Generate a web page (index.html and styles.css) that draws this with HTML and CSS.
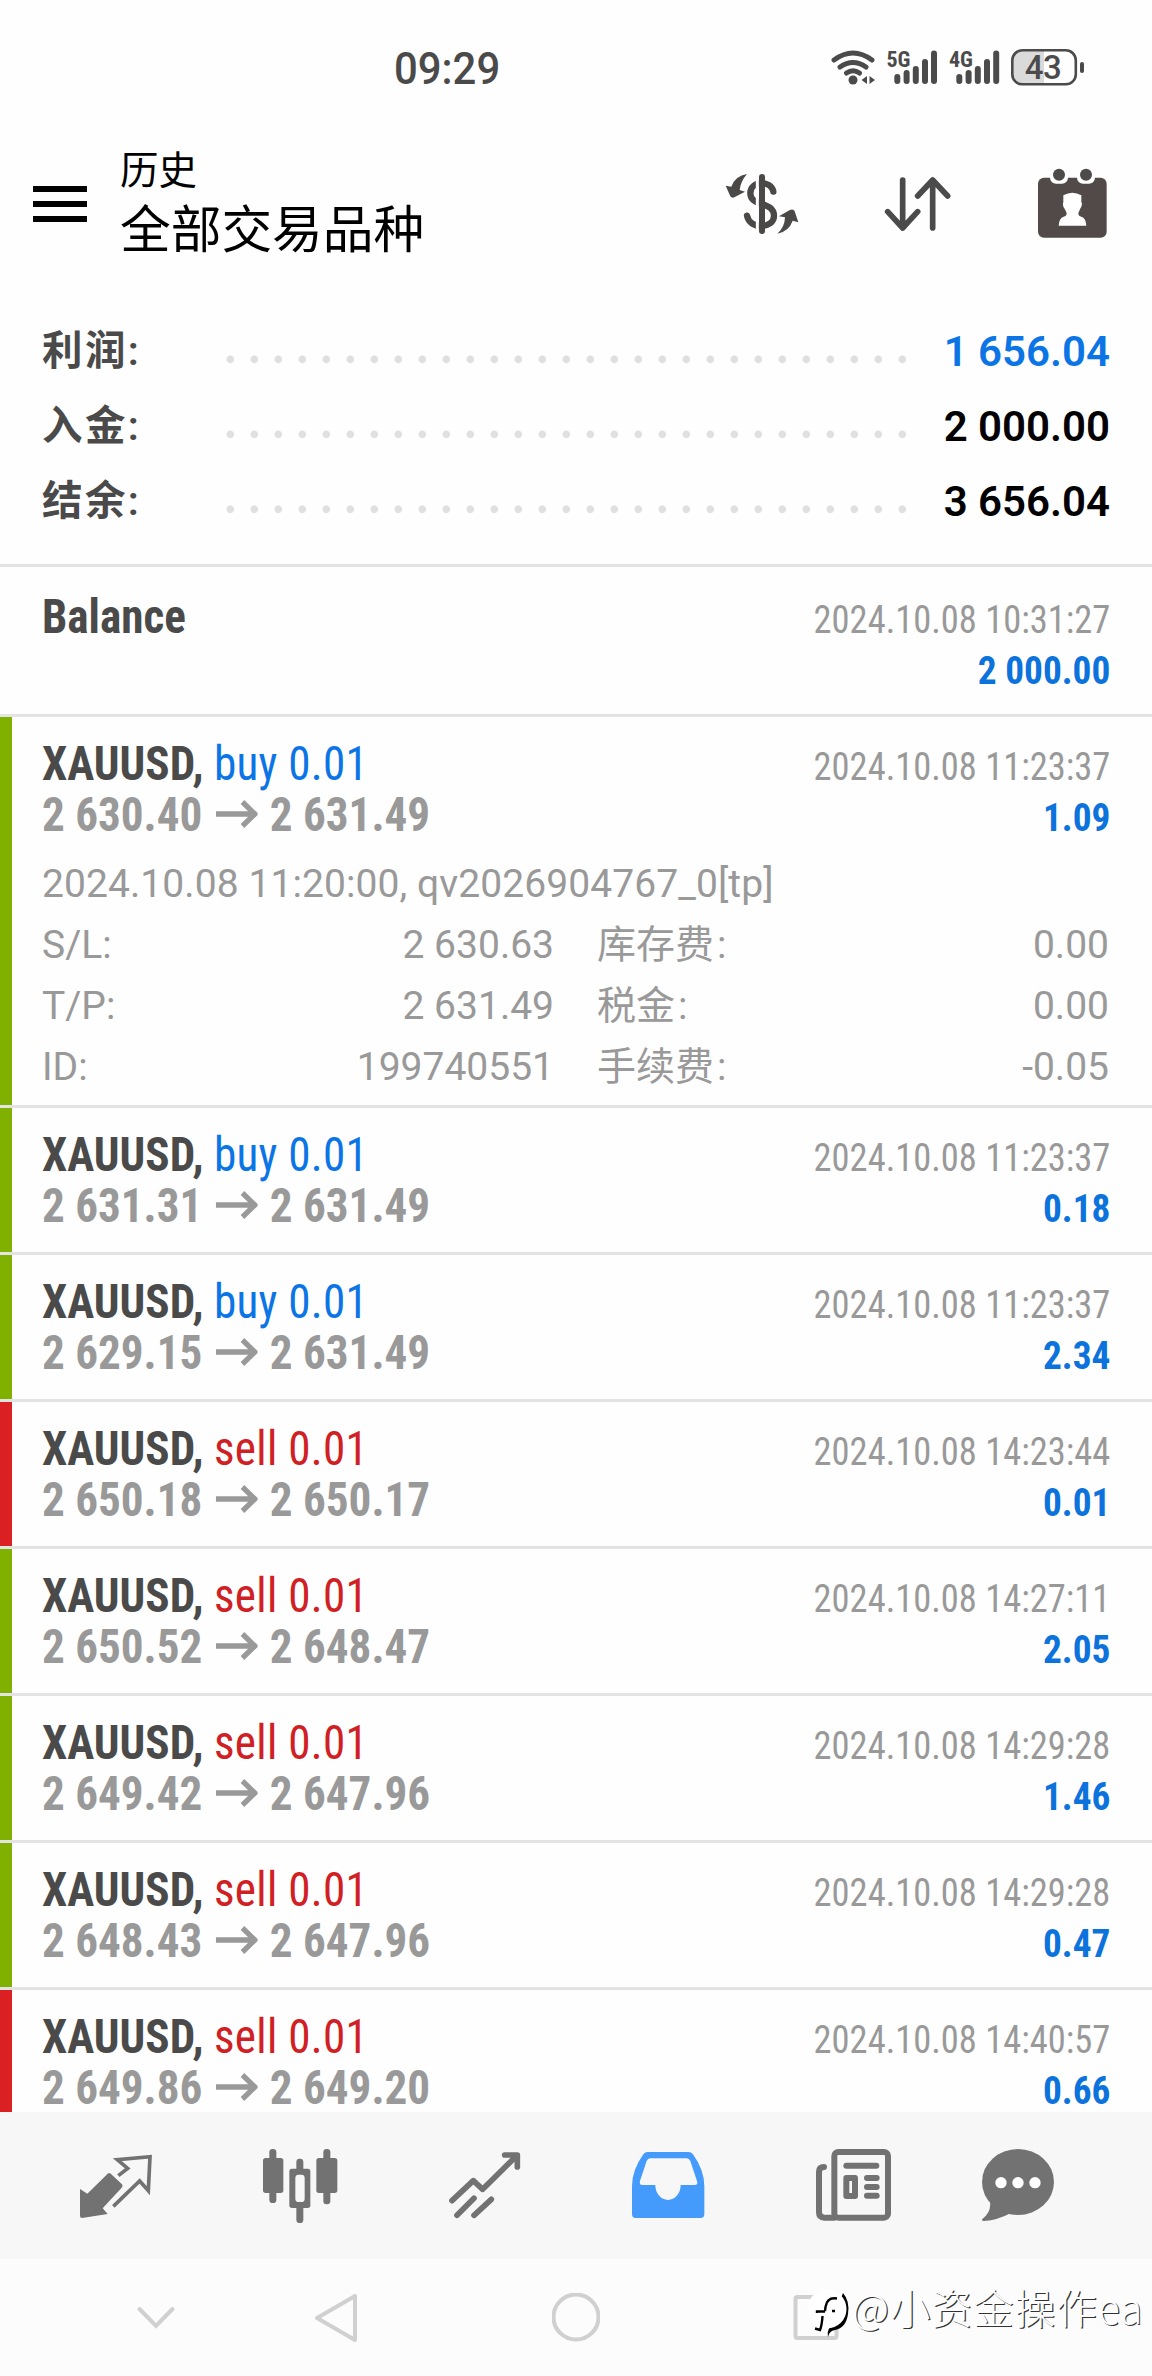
FILE: index.html
```html
<!DOCTYPE html>
<html lang="zh-CN">
<head>
<meta charset="utf-8">
<title>历史</title>
<link rel="stylesheet" href="styles.css">
</head>
<body>
<div class="screen">
  <div class="status">
    <span class="clock">09:29</span>
    <svg class="status-icons" width="256" height="46" viewBox="830 44 256 46">
      <g fill="none" stroke="#4b4b4b" stroke-width="5" stroke-linecap="round">
        <path d="M834 60q19-14 38 0M840 67q13-9 26 0M846.500 73q6.500-4.500 13 0"/>
      </g>
      <g fill="#4b4b4b">
        <circle cx="853" cy="80" r="4.500"/>
        <path d="M867 76v8l-5.500-4zM869.500 76v8l5.500-4z"/>
        <rect x="894.300" y="74" width="6" height="10" rx="3"/><rect x="903.600" y="70" width="6" height="14" rx="3"/><rect x="912.800" y="66" width="6" height="18" rx="3"/><rect x="922" y="59" width="6" height="25" rx="3"/><rect x="931" y="50.500" width="6" height="33.500" rx="3"/>
        <rect x="956.300" y="74" width="6" height="10" rx="3"/><rect x="965.600" y="70" width="6" height="14" rx="3"/><rect x="974.800" y="66" width="6" height="18" rx="3"/><rect x="984" y="59" width="6" height="25" rx="3"/><rect x="993.200" y="50.500" width="6" height="33.500" rx="3"/>
        <rect x="1080" y="62" width="4" height="11" rx="2"/>
      </g>
      <path d="M1044 50.500h-21a10 10 0 0 0-10 10v14a10 10 0 0 0 10 10h21z" fill="#dadada"/>
      <rect x="1012.300" y="50.300" width="63.500" height="34" rx="10" fill="none" stroke="#4b4b4b" stroke-width="2.600"/>
      <text class="net" x="886.500" y="67">5G</text>
      <text class="net" x="949" y="67">4G</text>
      <text class="charge" x="1043" y="79" text-anchor="middle">43</text>
    </svg>
  </div>

  <div class="header">
    <div class="burger"><i></i><i></i><i></i></div>
    <div class="titles">
      <div class="section">历史</div>
      <div class="symbols">全部交易品种</div>
    </div>
    <div class="actions">
      <svg width="75" height="64" viewBox="75 456 225 192">
        <g fill="none" stroke="#4b4848" stroke-width="19" stroke-linecap="round">
          <path d="M220 515C215 480 151 480 151 520C151 562 222 542 222 588C222 625 150 632 141 587"/>
        </g>
        <path d="M172 462V642" stroke="#fff" stroke-width="9"/>
        <path d="M186 471V633" stroke="#4b4848" stroke-width="18" stroke-linecap="round"/>
        <path fill="#4b4848" d="M141 462Q106 467 94 500L77 497L91 529Q96 536 103 532L135 515L119 510Q122 484 141 462ZM232 641Q254 623 255 592L237 589L268 571Q280 565 284 574L295 607L278 602Q267 634 232 641Z"/>
      </svg>
      <svg width="70" height="60" viewBox="550 462 210 180">
        <path d="M609 480V624M564 575L609 624L654 575M699 624V480M654 528L699 480L744 528" fill="none" stroke="#4b4b4b" stroke-width="17" stroke-linecap="round" stroke-linejoin="round"/>
      </svg>
      <svg width="72" height="72" viewBox="1008 442 216 216">
        <rect x="1014" y="471" width="206" height="180" rx="18" fill="#524a49"/>
        <path d="M1050 465v6a18 18 0 0 0 18 18h18a18 18 0 0 0 18-18v-6zM1131 465v6a18 18 0 0 0 18 18h18a18 18 0 0 0 18-18v-6z" fill="#fff"/>
        <circle cx="1077" cy="462" r="18" fill="#4f4a4a"/><circle cx="1158" cy="462" r="18" fill="#4f4a4a"/>
        <path d="M1090 524Q1117 508 1144 524V545Q1148 548 1144 558Q1141 562 1138 570Q1130 584 1144 588Q1158 592 1159 615H1076Q1077 592 1091 588Q1105 584 1097 570Q1093 562 1090 558Q1087 548 1090 545Z" fill="#fff"/>
      </svg>
    </div>
  </div>

  <div class="summary">
    <div class="sum-row"><span class="sum-label">利润:</span><span class="dots"></span><span class="sum-value blue">1 656.04</span></div>
    <div class="sum-row"><span class="sum-label">入金:</span><span class="dots"></span><span class="sum-value">2 000.00</span></div>
    <div class="sum-row"><span class="sum-label">结余:</span><span class="dots"></span><span class="sum-value">3 656.04</span></div>
  </div>

  <div class="list">
    <div class="deal plain"><div class="deal-body">
      <div class="line"><span class="symbol">Balance</span><span class="time">2024.10.08 10:31:27</span></div>
      <div class="line"><span></span><span class="profit">2 000.00</span></div>
    </div></div>

    <div class="deal up"><div class="deal-body">
      <div class="line"><span class="symbol">XAUUSD, <span class="buy">buy 0.01</span></span><span class="time">2024.10.08 11:23:37</span></div>
      <div class="line"><span class="price">2 630.40<svg class="arrow" viewBox="0 0 44 28"><path d="M0 14H41M28 2L41 14L28 26"/></svg>2 631.49</span><span class="profit">1.09</span></div>
      <div class="details">
        <div class="comment">2024.10.08 11:20:00, qv2026904767_0[tp]</div>
        <div class="pair"><span>S/L:</span><span>2 630.63</span></div><div class="pair"><span>库存费<b>:</b></span><span>0.00</span></div>
        <div class="pair"><span>T/P:</span><span>2 631.49</span></div><div class="pair"><span>税金<b>:</b></span><span>0.00</span></div>
        <div class="pair"><span>ID:</span><span>199740551</span></div><div class="pair"><span>手续费<b>:</b></span><span>-0.05</span></div>
      </div>
    </div></div>

    <div class="deal up"><div class="deal-body">
      <div class="line"><span class="symbol">XAUUSD, <span class="buy">buy 0.01</span></span><span class="time">2024.10.08 11:23:37</span></div>
      <div class="line"><span class="price">2 631.31<svg class="arrow" viewBox="0 0 44 28"><path d="M0 14H41M28 2L41 14L28 26"/></svg>2 631.49</span><span class="profit">0.18</span></div>
    </div></div>

    <div class="deal up"><div class="deal-body">
      <div class="line"><span class="symbol">XAUUSD, <span class="buy">buy 0.01</span></span><span class="time">2024.10.08 11:23:37</span></div>
      <div class="line"><span class="price">2 629.15<svg class="arrow" viewBox="0 0 44 28"><path d="M0 14H41M28 2L41 14L28 26"/></svg>2 631.49</span><span class="profit">2.34</span></div>
    </div></div>

    <div class="deal down"><div class="deal-body">
      <div class="line"><span class="symbol">XAUUSD, <span class="sell">sell 0.01</span></span><span class="time">2024.10.08 14:23:44</span></div>
      <div class="line"><span class="price">2 650.18<svg class="arrow" viewBox="0 0 44 28"><path d="M0 14H41M28 2L41 14L28 26"/></svg>2 650.17</span><span class="profit">0.01</span></div>
    </div></div>

    <div class="deal up"><div class="deal-body">
      <div class="line"><span class="symbol">XAUUSD, <span class="sell">sell 0.01</span></span><span class="time">2024.10.08 14:27:11</span></div>
      <div class="line"><span class="price">2 650.52<svg class="arrow" viewBox="0 0 44 28"><path d="M0 14H41M28 2L41 14L28 26"/></svg>2 648.47</span><span class="profit">2.05</span></div>
    </div></div>

    <div class="deal up"><div class="deal-body">
      <div class="line"><span class="symbol">XAUUSD, <span class="sell">sell 0.01</span></span><span class="time">2024.10.08 14:29:28</span></div>
      <div class="line"><span class="price">2 649.42<svg class="arrow" viewBox="0 0 44 28"><path d="M0 14H41M28 2L41 14L28 26"/></svg>2 647.96</span><span class="profit">1.46</span></div>
    </div></div>

    <div class="deal up"><div class="deal-body">
      <div class="line"><span class="symbol">XAUUSD, <span class="sell">sell 0.01</span></span><span class="time">2024.10.08 14:29:28</span></div>
      <div class="line"><span class="price">2 648.43<svg class="arrow" viewBox="0 0 44 28"><path d="M0 14H41M28 2L41 14L28 26"/></svg>2 647.96</span><span class="profit">0.47</span></div>
    </div></div>

    <div class="deal down"><div class="deal-body">
      <div class="line"><span class="symbol">XAUUSD, <span class="sell">sell 0.01</span></span><span class="time">2024.10.08 14:40:57</span></div>
      <div class="line"><span class="price">2 649.86<svg class="arrow" viewBox="0 0 44 28"><path d="M0 14H41M28 2L41 14L28 26"/></svg>2 649.20</span><span class="profit">0.66</span></div>
    </div></div>
  </div>

  <div class="tabs">
    <svg width="72" height="80" viewBox="60 45 216 240">
      <path d="M60 174L82 188L143 128Q148 123 153 129L186 160Q190 165 185 170L128 232L143 249L66 261Q60 261 60 254Z" fill="#727272"/>
      <path d="M175 134L203 112L172 86L270 77L265 179L239 150L160 226" fill="none" stroke="#727272" stroke-width="11"/>
    </svg>
    <svg width="75" height="80" viewBox="608 45 225 240">
      <g fill="#727272"><rect x="627" y="54" width="21" height="162" rx="10"/><rect x="608" y="81" width="61" height="105" rx="8"/><rect x="789" y="54" width="21" height="166" rx="10"/><rect x="768" y="81" width="63" height="105" rx="8"/><rect x="708" y="83" width="21" height="193" rx="10"/><rect x="687" y="113" width="63" height="118" rx="8"/></g>
      <rect x="705" y="131" width="28" height="82" rx="10" fill="#f7f7f7"/>
    </svg>
    <svg width="72" height="80" viewBox="1164 45 216 240">
      <path d="M1173 209L1237 149L1265 175L1366 75M1331 72H1369V108M1239 202L1188 253M1291 205L1239 253" fill="none" stroke="#727272" stroke-width="17" stroke-linecap="round" stroke-linejoin="round"/>
    </svg>
    <svg width="73" height="80" viewBox="67 45 219 240">
      <path fill="#449bfc" fill-rule="evenodd" d="M114 63H236Q245 63 250 70Q284 118 284 165V250Q284 261 273 261H78Q67 261 67 250V165Q67 118 101 70Q106 63 114 63ZM122 82Q114 82 111 90L91 150Q88 162 98 162H137A38 45 0 0 0 213 162H255Q266 162 262 150L242 90Q239 82 231 82Z"/>
    </svg>
    <svg width="75" height="80" viewBox="619 45 225 240">
      <g fill="none" stroke="#727272" stroke-width="18" stroke-linecap="round" stroke-linejoin="round">
        <path d="M643 108Q628 108 628 122V244Q628 260 644 260H674"/>
        <rect x="674" y="63" width="161" height="197" rx="12"/>
        <path d="M710 104H800M772 141H801M772 168H801M772 194H801"/>
        <path d="M710 141H736V195H710Z"/>
      </g>
    </svg>
    <svg class="chat" width="72" height="80" viewBox="1116 45 216 240">
      <path d="M1139 205Q1147 242 1117 264Q1114 270 1122 270Q1165 266 1198 248Z" fill="#727272"/>
      <ellipse cx="1224" cy="153" rx="108" ry="99" fill="#727272"/>
      <circle cx="1173" cy="155" r="17" fill="#fff"/><circle cx="1224" cy="155" r="17" fill="#fff"/><circle cx="1275" cy="155" r="17" fill="#fff"/>
    </svg>
  </div>

  <div class="nav">
    <svg class="hide" width="48" height="50" viewBox="132 2293 48 50"><path d="M139.500 2309L156 2326L172.500 2309" stroke-linecap="round"/></svg>
    <svg width="48" height="50" viewBox="312 2293 48 50"><path d="M355 2296V2340L317 2318Z" stroke-linejoin="round"/></svg>
    <svg width="48" height="50" viewBox="552 2293 48 50"><circle cx="576" cy="2317" r="22.500"/></svg>
    <svg width="48" height="50" viewBox="792 2293 48 50"><rect x="795.500" y="2297" width="41" height="41" rx="2"/></svg>
    <div class="watermark">
      <svg width="48" height="50" viewBox="805 2288 48 50">
        <path d="M843 2294Q850 2302 848 2315Q846 2329 835 2331Q829 2332 828 2338Q827 2332 830 2328Z" fill="#000"/>
        <circle cx="827" cy="2310" r="19.500" fill="#fff"/>
        <path d="M837 2299.500Q827 2298 825.500 2308L825 2312M817 2314V2312.500H825M822.500 2317Q822 2326 820 2331L815 2329.500M832 2312H835" fill="none" stroke="#000" stroke-width="2.400"/>
      </svg>
      <span>@小资金操作ea</span>
    </div>
  </div>
</div>
</body>
</html>
```
FILE: styles.css
```css
* { box-sizing: border-box; }
body {
  margin: 0;
  background: #fefefe;
  font-family: Roboto, "Noto Sans CJK SC", sans-serif;
  color: #4a4a4a;
}
svg { display: block; flex: none; }
.screen { width: 1152px; height: 2376px; display: flex; flex-direction: column; overflow: hidden; }

.status { height: 134px; flex: none; display: flex; align-items: center; justify-content: space-between; padding: 0 66px 0 394px; }
.clock { font: 500 45px/45px Roboto, sans-serif; transform: scaleX(0.93); transform-origin: left; padding-top: 3px; }
.net { font: 700 22px "Roboto Condensed", sans-serif; fill: #4b4b4b; }
.charge { font: 500 33px Roboto, sans-serif; letter-spacing: -0.5px; fill: #4b4b4b; }

.header { height: 139px; flex: none; display: flex; align-items: center; padding: 0 44px 0 33px; }
.burger { width: 54px; display: flex; flex-direction: column; gap: 9px; margin-right: 33px; }
.burger i { height: 6px; background: #000; }
.titles { font-family: "Noto Sans CJK SC", sans-serif; color: #000; flex: 1; padding-bottom: 7px; }
.section { font-size: 38.5px; line-height: 52px; }
.symbols { font-size: 50.7px; line-height: 66px; }
.actions { display: flex; align-items: center; gap: 83px; }

.summary { padding: 41px 42px 25px; flex: none; }
.sum-row { height: 75px; line-height: 75px; display: flex; font-size: 42px; font-weight: 600; }
.sum-label { width: 176px; font-size: 40.5px; letter-spacing: 2.4px; }
.dots { width: 696px; background: radial-gradient(circle at 12.300px 45.300px, #e0e0e0 3.300px, transparent 4.300px) 0 0 / 24px 75px repeat-x; }
.sum-value { margin-left: auto; color: #000; }
.sum-value.blue { color: #0c75e6; }

.list { flex: 1; min-height: 0; overflow: hidden; }
.deal { border-top: 3px solid #e3e3e3; display: flex; }
.deal::before { content: ""; width: 12px; flex: none; }
.up::before { background: #80b000; }
.down::before { background: #db2024; }
.deal-body { flex: 1; padding: 22px 42px 20px 30px; }
.plain .deal-body { padding: 25px 42px 20px 30px; }
.line { height: 51px; line-height: 51px; display: flex; justify-content: space-between; align-items: baseline; font-family: "Roboto Condensed", sans-serif; white-space: pre; }
.plain .line + .line { padding-top: 2px; }
.symbol, .price { font-size: 47.5px; font-weight: 700; transform: scaleX(0.95); transform-origin: left; }
.buy, .sell { font-weight: 400; letter-spacing: 0.3px; }
.buy { color: #0c75e6; }
.sell { color: #d02024; }
.price { color: #999; }
.arrow { display: inline-block; width: 44px; height: 28px; margin: 0 13px 0 14px; vertical-align: 3px; fill: none; stroke: #999; stroke-width: 5.500; }
.time { font-size: 39px; transform: scaleX(0.935); transform-origin: right; color: #999; }
.profit { font-size: 39.500px; font-weight: 700; transform: scaleX(0.945); transform-origin: right; color: #0c72dc; }

.details { margin: 13px 0 -13px; display: grid; grid-template-columns: 512px 512px; column-gap: 43px; font-size: 39px; line-height: 61px; color: #999; }
.comment { grid-column: 1 / -1; letter-spacing: 0.08px; }
.pair { height: 61px; display: flex; justify-content: space-between; }
.pair b { font-weight: 400; margin-left: 3px; }

.tabs { height: 147px; flex: none; background: #f7f7f7; display: flex; align-items: center; gap: 111px; padding-left: 79.500px; }
.chat { margin-left: -20px; }
.nav { position: relative; height: 117px; flex: none; background: #fcfcfc; display: flex; align-items: center; gap: 192px; padding-left: 132px; }
.nav > svg { fill: none; stroke: #d0d0d0; stroke-width: 4; }
.hide { margin-right: -60px; }
.watermark { position: absolute; left: 805px; top: 28px; display: flex; align-items: center; }
.watermark span { margin: -10px 0 0 -1px; font: 300 40.5px/50px "Noto Sans CJK SC", sans-serif; letter-spacing: 1.1px; color: #fff; text-shadow: 1.200px 1.200px 0 #333; white-space: nowrap; }
```
